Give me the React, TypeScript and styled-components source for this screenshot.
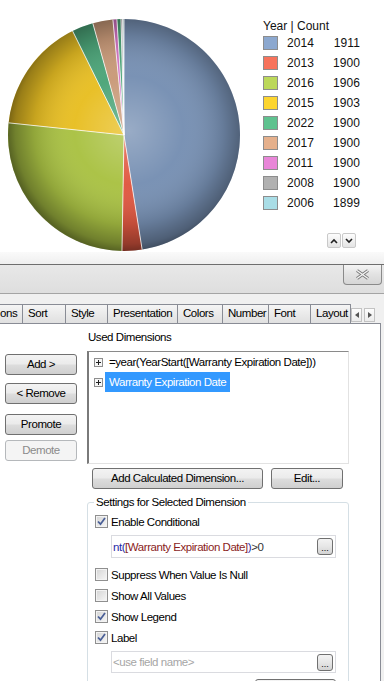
import React from "react";
import styled, { createGlobalStyle } from "styled-components";

const GlobalStyle = createGlobalStyle`
  html, body {
    margin: 0;
    padding: 0;
    background: #fff;
    overflow: hidden;
  }
  body {
    font-family: "Liberation Sans", Arial, sans-serif;
    font-size: 11.5px;
    letter-spacing: -0.45px;
    color: #000;
  }
`;

const legend = [
    { year: "2014", count: "1911", swatch: "#8ca8cf" },
    { year: "2013", count: "1900", swatch: "#f7735c" },
    { year: "2016", count: "1906", swatch: "#bcd85a" },
    { year: "2015", count: "1903", swatch: "#fcd52f" },
    { year: "2022", count: "1900", swatch: "#5fc28f" },
    { year: "2017", count: "1900", swatch: "#e5b08c" },
    { year: "2011", count: "1900", swatch: "#e886d8" },
    { year: "2008", count: "1900", swatch: "#b1b1b1" },
    { year: "2006", count: "1899", swatch: "#a9dde6" },
];

const slices = [
    { from: 0, to: 171, color: "#7790b3" },
    { from: 171, to: 181, color: "#e05841" },
    { from: 181, to: 276, color: "#aac244" },
    { from: 276, to: 333.7, color: "#e8bf24" },
    { from: 333.7, to: 344.4, color: "#4ca579" },
    { from: 344.4, to: 354.5, color: "#c99a79" },
    { from: 354.5, to: 356.5, color: "#d474c4" },
    { from: 356.5, to: 358.5, color: "#4ca579" },
    { from: 358.5, to: 359.3, color: "#a0a0a0" },
    { from: 359.3, to: 360, color: "#cfe7ec" },
];

const tabs = [
    { label: "ons", width: 24, first: true },
    { label: "Sort", width: 44 },
    { label: "Style", width: 43 },
    { label: "Presentation", width: 71 },
    { label: "Colors", width: 46 },
    { label: "Number", width: 47 },
    { label: "Font", width: 43 },
    { label: "Layout", width: 41 },
];

function polar(cx: number, cy: number, r: number, deg: number) {
    const a = ((deg - 90) * Math.PI) / 180;
    return [cx + r * Math.cos(a), cy + r * Math.sin(a)];
}

function arc(cx: number, cy: number, r: number, a0: number, a1: number) {
    const [x0, y0] = polar(cx, cy, r, a0);
    const [x1, y1] = polar(cx, cy, r, a1);
    const large = a1 - a0 > 180 ? 1 : 0;
    return `M${cx} ${cy} L${x0} ${y0} A${r} ${r} 0 ${large} 1 ${x1} ${y1} Z`;
}

const Page = styled.div`
    width: 384px;
    height: 681px;
    overflow: hidden;
    display: flex;
    flex-direction: column;
`;

const ChartArea = styled.div`
    height: 252px;
    flex-shrink: 0;
    display: flex;
    background: #fff;
`;

const PieBox = styled.div`
    padding: 15px 0 0 4px;
    width: 240px;
    height: 240px;
`;

const Legend = styled.div`
    margin-left: 19px;
    width: 97px;
    padding: 19px 0 4px;
    display: flex;
    flex-direction: column;
    font-size: 12px;
    letter-spacing: 0.1px;
    color: #111;
`;

const LegendTitle = styled.div`
    line-height: 14px;
    height: 14px;
    letter-spacing: 0;
`;

const LegendRow = styled.div`
    height: 20px;
    display: grid;
    grid-template-columns: 15px 1fr auto;
    column-gap: 9px;
    align-items: center;
`;

const Swatch = styled.span<{ $color: string }>`
    width: 15px;
    height: 14px;
    box-sizing: border-box;
    border: 1px solid #8d8d8d;
    background: ${(p) => p.$color};
`;

const Count = styled.span`
    text-align: right;
`;

const ScrollRow = styled.div`
    margin-top: auto;
    display: flex;
    justify-content: flex-end;
    gap: 1px;
    padding-right: 4px;
`;

const ScrollButton = styled.span`
    width: 14px;
    height: 15px;
    box-sizing: border-box;
    border: 1px solid #c9c9c9;
    border-radius: 2px;
    background: linear-gradient(#fdfdfd, #e4e4e4);
    display: flex;
    align-items: center;
    justify-content: center;
`;

const Shade = styled.div`
    height: 12px;
    flex-shrink: 0;
    background: linear-gradient(#fafafa, #efefef);
`;

const Dialog = styled.div`
    flex: 1;
    display: flex;
    flex-direction: column;
    background: #f0f0f0;
`;

const TitleBar = styled.div`
    height: 28px;
    flex-shrink: 0;
    border-top: 1px solid #6e6e6e;
    border-bottom: 1px solid #a4a4a4;
    background: linear-gradient(#e8e8e8, #dedede);
    display: flex;
    justify-content: flex-end;
    align-items: flex-start;
    padding-right: 2px;
`;

const CloseButton = styled.span`
    width: 39px;
    height: 20px;
    box-sizing: border-box;
    border: 1px solid #8a8a8a;
    border-top: none;
    border-radius: 0 0 4px 4px;
    background: linear-gradient(#f4f4f4, #e2e2e2 50%, #d6d6d6);
    display: flex;
    align-items: center;
    justify-content: center;
`;

const TabStrip = styled.div`
    height: 29px;
    flex-shrink: 0;
    box-sizing: border-box;
    padding-top: 10px;
    display: flex;
    align-items: flex-end;
`;

const Tab = styled.span<{ $width: number; $first?: boolean }>`
    width: ${(p) => p.$width}px;
    height: 19px;
    box-sizing: border-box;
    margin-left: -1px;
    border: 1px solid #898c95;
    border-bottom: none;
    background: linear-gradient(#f5f5f5, #e9e9e9 55%, #e0e0e0);
    line-height: 17px;
    white-space: nowrap;
    overflow: hidden;
    padding: ${(p) => (p.$first ? "0 5px 0 0" : "0 0 0 5px")};
    text-align: ${(p) => (p.$first ? "right" : "left")};
`;

const TabScroll = styled.span`
    display: flex;
    gap: 2px;
    align-self: center;
    margin-top: 2px;
`;

const TabArrow = styled.span`
    width: 11px;
    height: 14px;
    box-sizing: border-box;
    border: 1px solid #c3c3c3;
    background: linear-gradient(#fdfdfd, #ececec);
    display: flex;
    align-items: center;
    justify-content: center;
`;

const Panel = styled.div`
    width: 381px;
    flex: 1;
    box-sizing: border-box;
    border-top: 1px solid #898c95;
    border-right: 1px solid #898c95;
    background: #fff;
    display: flex;
`;

const LeftCol = styled.div`
    width: 87px;
    flex-shrink: 0;
    box-sizing: border-box;
    padding: 30px 0 0 5px;
    display: flex;
    flex-direction: column;
`;

const RightCol = styled.div`
    width: 262px;
    padding-top: 6px;
    display: flex;
    flex-direction: column;
`;

const Button = styled.span<{ $top?: number; $width?: number; $left?: number; $disabled?: boolean }>`
    width: ${(p) => p.$width ?? 72}px;
    height: 21px;
    flex-shrink: 0;
    margin-top: ${(p) => p.$top ?? 0}px;
    margin-left: ${(p) => p.$left ?? 0}px;
    box-sizing: border-box;
    border: 1px solid ${(p) => (p.$disabled ? "#b5b8bb" : "#707070")};
    border-radius: 3px;
    background: ${(p) =>
        p.$disabled
            ? "#f4f4f4"
            : "linear-gradient(#f3f3f3, #ebebeb 48%, #dddddd 52%, #cfcfcf)"};
    color: ${(p) => (p.$disabled ? "#8b8b8b" : "#000")};
    display: flex;
    align-items: center;
    justify-content: center;
    line-height: 19px;
`;

const Label = styled.div`
    line-height: 14px;
    margin-left: 1px;
`;

const ListBox = styled.div`
    margin-top: 7px;
    height: 113px;
    box-sizing: border-box;
    border-style: solid;
    border-width: 1px 1px 1px 2px;
    border-color: #8a8a8a #e2e2e2 #e2e2e2 #7a7a7a;
    padding: 0 0 0 5px;
`;

const ListItem = styled.div<{ $selected?: boolean }>`
    height: 20px;
    display: flex;
    align-items: center;
    white-space: nowrap;
    color: ${(p) => (p.$selected ? "#fff" : "#000")};
`;

const ItemText = styled.span<{ $selected?: boolean }>`
    margin-left: 2px;
    padding: 0 4px;
    line-height: 20px;
    background: ${(p) => (p.$selected ? "#3399ff" : "transparent")};
`;

const ButtonRow = styled.div`
    display: flex;
    gap: 8px;
    margin-top: 4px;
`;

const Group = styled.fieldset`
    margin: 6px 0 0;
    padding: 0 0 0 7px;
    min-width: 0;
    border: 1px solid #d5dfe5;
    border-radius: 3px;
    display: flex;
    flex-direction: column;
    flex: 1;
`;

const GroupLegend = styled.legend`
    margin-left: -1px;
    padding: 0 2px;
    line-height: 14px;
`;

const CheckRow = styled.div<{ $top?: number }>`
    height: 21px;
    margin-top: ${(p) => p.$top ?? 0}px;
    display: flex;
    align-items: center;
    gap: 3px;
`;

const Box = styled.span`
    width: 13px;
    height: 13px;
    box-sizing: border-box;
    border: 1px solid #8f8f8f;
    background: linear-gradient(135deg, #d4d4d4, #f7f7f7);
    box-shadow: inset 0 0 0 1px #f3f3f3;
    display: flex;
    align-items: center;
    justify-content: center;
`;

const Field = styled.div<{ $top: number; $height: number }>`
    width: 225px;
    height: ${(p) => p.$height}px;
    margin: ${(p) => p.$top}px 0 0 16px;
    box-sizing: border-box;
    border: 1px solid #dadbe0;
    background: #fff;
    display: flex;
    align-items: center;
    padding: 0 2px 0 1px;
    white-space: nowrap;
`;

const Placeholder = styled.span`
    color: #a6a6a6;
`;

const Code = styled.span<{ $color: string }>`
    color: ${(p) => p.$color};
`;

const DotsButton = styled.span`
    margin-left: auto;
    width: 16px;
    height: 17px;
    box-sizing: border-box;
    border: 1px solid #707070;
    border-radius: 3px;
    background: linear-gradient(#f3f3f3, #e6e6e6 50%, #d3d3d3);
    display: flex;
    align-items: flex-end;
    justify-content: center;
    font-size: 9px;
    line-height: 11px;
    letter-spacing: 0;
`;

function PlusBox() {
    return (
        <svg width="9" height="9" viewBox="0 0 9 9">
            <rect x="0.5" y="0.5" width="8" height="8" fill="#f6f6f6" stroke="#8e8e8e" />
            <path d="M2 4.5h5M4.5 2v5" stroke="#222" strokeWidth="1" />
        </svg>
    );
}

function Check({ checked }: { checked?: boolean }) {
    return (
        <Box>
            {checked && (
                <svg width="9" height="9" viewBox="0 0 9 9">
                    <path d="M1 4.5 L3.5 7.2 L8 1" fill="none" stroke="#4a5f97" strokeWidth="1.8" />
                </svg>
            )}
        </Box>
    );
}

function Pie() {
    const c = 120;
    const r = 116;
    return (
        <svg width="240" height="240" viewBox="0 0 240 240">
            <defs>
                <radialGradient id="shade" cx="0.52" cy="0.48" r="0.52">
                    <stop offset="0" stopColor="#fff" stopOpacity="0.25" />
                    <stop offset="0.45" stopColor="#fff" stopOpacity="0.02" />
                    <stop offset="0.78" stopColor="#000" stopOpacity="0.14" />
                    <stop offset="0.94" stopColor="#000" stopOpacity="0.34" />
                    <stop offset="1" stopColor="#000" stopOpacity="0.48" />
                </radialGradient>
            </defs>
            {slices.map((s, i) => (
                <path key={i} d={arc(c, c, r, s.from, s.to)} fill={s.color} />
            ))}
            <circle cx={c} cy={c} r={r} fill="url(#shade)" />
            {slices.map((s, i) => {
                const [x, y] = polar(c, c, r, s.from);
                return (
                    <line key={i} x1={c} y1={c} x2={x} y2={y} stroke="#fff" strokeOpacity="0.75" strokeWidth="1" />
                );
            })}
        </svg>
    );
}

export default function App() {
    return (
        <Page>
            <GlobalStyle />
            <ChartArea>
                <PieBox>
                    <Pie />
                </PieBox>
                <Legend>
                    <LegendTitle>Year | Count</LegendTitle>
                    {legend.map((l) => (
                        <LegendRow key={l.year}>
                            <Swatch $color={l.swatch} />
                            <span>{l.year}</span>
                            <Count>{l.count}</Count>
                        </LegendRow>
                    ))}
                    <ScrollRow>
                        <ScrollButton>
                            <svg width="8" height="6" viewBox="0 0 8 6">
                                <path d="M1 5 L4 2 L7 5" fill="none" stroke="#222" strokeWidth="1.6" />
                            </svg>
                        </ScrollButton>
                        <ScrollButton>
                            <svg width="8" height="6" viewBox="0 0 8 6">
                                <path d="M1 1 L4 4 L7 1" fill="none" stroke="#222" strokeWidth="1.6" />
                            </svg>
                        </ScrollButton>
                    </ScrollRow>
                </Legend>
            </ChartArea>
            <Shade />
            <Dialog>
                <TitleBar>
                    <CloseButton>
                        <svg width="15" height="11" viewBox="0 0 15 11">
                            <path d="M2 1.5 L13 9.5 M13 1.5 L2 9.5" stroke="#7b7b7b" strokeWidth="3.2" />
                            <path d="M2 1.5 L13 9.5 M13 1.5 L2 9.5" stroke="#f6f6f6" strokeWidth="1.3" />
                        </svg>
                    </CloseButton>
                </TitleBar>
                <TabStrip>
                    {tabs.map((t) => (
                        <Tab key={t.label} $width={t.width} $first={t.first}>
                            {t.label}
                        </Tab>
                    ))}
                    <TabScroll>
                        <TabArrow>
                            <svg width="4" height="6" viewBox="0 0 4 6">
                                <path d="M4 0 L0 3 L4 6 Z" fill="#555" />
                            </svg>
                        </TabArrow>
                        <TabArrow>
                            <svg width="4" height="6" viewBox="0 0 4 6">
                                <path d="M0 0 L4 3 L0 6 Z" fill="#555" />
                            </svg>
                        </TabArrow>
                    </TabScroll>
                </TabStrip>
                <Panel>
                    <LeftCol>
                        <Button>Add &gt;</Button>
                        <Button $top={8}>&lt; Remove</Button>
                        <Button $top={10}>Promote</Button>
                        <Button $top={5} $disabled>
                            Demote
                        </Button>
                    </LeftCol>
                    <RightCol>
                        <Label>Used Dimensions</Label>
                        <ListBox>
                            <ListItem>
                                <PlusBox />
                                <ItemText>=year(YearStart([Warranty Expiration Date]))</ItemText>
                            </ListItem>
                            <ListItem $selected>
                                <PlusBox />
                                <ItemText $selected>Warranty Expiration Date</ItemText>
                            </ListItem>
                        </ListBox>
                        <ButtonRow>
                            <Button $width={171} $left={5}>
                                Add Calculated Dimension...
                            </Button>
                            <Button $width={72}>Edit...</Button>
                        </ButtonRow>
                        <Group>
                            <GroupLegend>Settings for Selected Dimension</GroupLegend>
                            <CheckRow $top={2}>
                                <Check checked />
                                <span>Enable Conditional</span>
                            </CheckRow>
                            <Field $top={3} $height={23}>
                                <Code $color="#1f2aa8">nt(</Code>
                                <Code $color="#8a1c1c">[Warranty Expiration Date]</Code>
                                <Code $color="#1f2aa8">)</Code>
                                <Code $color="#333">&gt;0</Code>
                                <DotsButton>...</DotsButton>
                            </Field>
                            <CheckRow $top={6}>
                                <Check />
                                <span>Suppress When Value Is Null</span>
                            </CheckRow>
                            <CheckRow>
                                <Check />
                                <span>Show All Values</span>
                            </CheckRow>
                            <CheckRow>
                                <Check checked />
                                <span>Show Legend</span>
                            </CheckRow>
                            <CheckRow>
                                <Check checked />
                                <span>Label</span>
                            </CheckRow>
                            <Field $top={3} $height={22}>
                                <Placeholder>&lt;use field name&gt;</Placeholder>
                                <DotsButton>...</DotsButton>
                            </Field>
                            <Button $top={6} $left={160} $width={81} />
                        </Group>
                    </RightCol>
                </Panel>
            </Dialog>
        </Page>
    );
}
